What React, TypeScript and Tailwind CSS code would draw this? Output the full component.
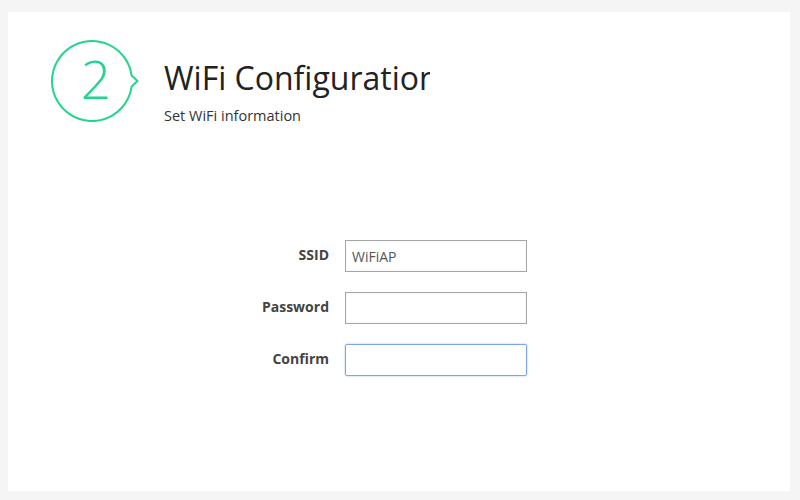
import React from "react";

const font = { fontFamily: '"Open Sans", "Noto Sans", "Liberation Sans", sans-serif' };

function StepBadge() {
  return (
    <svg width="92" height="86" viewBox="0 0 92 86" className="shrink-0">
      <path
        d="M 81.6 37.4 L 87.5 43 L 81.6 48.6 A 40 40 0 1 1 81.6 37.4 Z"
        fill="none"
        stroke="#22d48c"
        strokeWidth="2"
        strokeLinejoin="round"
      />
      <text
        x="46"
        y="61"
        textAnchor="middle"
        fill="#22d48c"
        fontSize="53"
        fontWeight="300"
        style={font}
      >
        2
      </text>
    </svg>
  );
}

function Row({ label, value, focused }: { label: string; value?: string; focused?: boolean }) {
  return (
    <div className="flex items-center">
      <div className="w-[100px] pb-[4px] text-right text-[14px] font-bold text-[#444]" style={font}>
        {label}
      </div>
      <input
        readOnly
        value={value ?? ""}
        className={
          focused
            ? "ml-[16px] h-[32px] w-[182px] rounded-[2px] border border-[#7ea6e6] bg-white px-[6px] text-[14px] text-[#555] outline-none shadow-[0_0_2px_#9dbdf0]"
            : "ml-[16px] h-[32px] w-[182px] border border-[#a6a6a6] bg-white px-[6px] text-[14px] text-[#555] outline-none shadow-[inset_0_0_1px_#ccc]"
        }
        style={font}
      />
    </div>
  );
}

export default function App() {
  return (
    <div className="h-[500px] w-[800px] bg-[#f5f5f5] pt-[12px] pl-[8px] pr-[10px] pb-[9px]">
      <div className="h-full w-full bg-white">
        <div className="flex items-start pt-[26px] pl-[42px]">
          <StepBadge />
          <div className="ml-[22px] mt-[19px]">
            <div className="w-[266px] overflow-hidden whitespace-nowrap text-[32px] leading-[42px] text-[#222]" style={font}>
              WiFi Configuration
            </div>
            <div className="mt-[10px] text-[14.5px] leading-[14px] text-[#333]" style={font}>
              Set WiFi information
            </div>
          </div>
        </div>
        <div className="mt-[116px] flex flex-col gap-5 pl-[221px]">
          <Row label="SSID" value="WiFiAP" />
          <Row label="Password" />
          <Row label="Confirm" focused />
        </div>
      </div>
    </div>
  );
}
